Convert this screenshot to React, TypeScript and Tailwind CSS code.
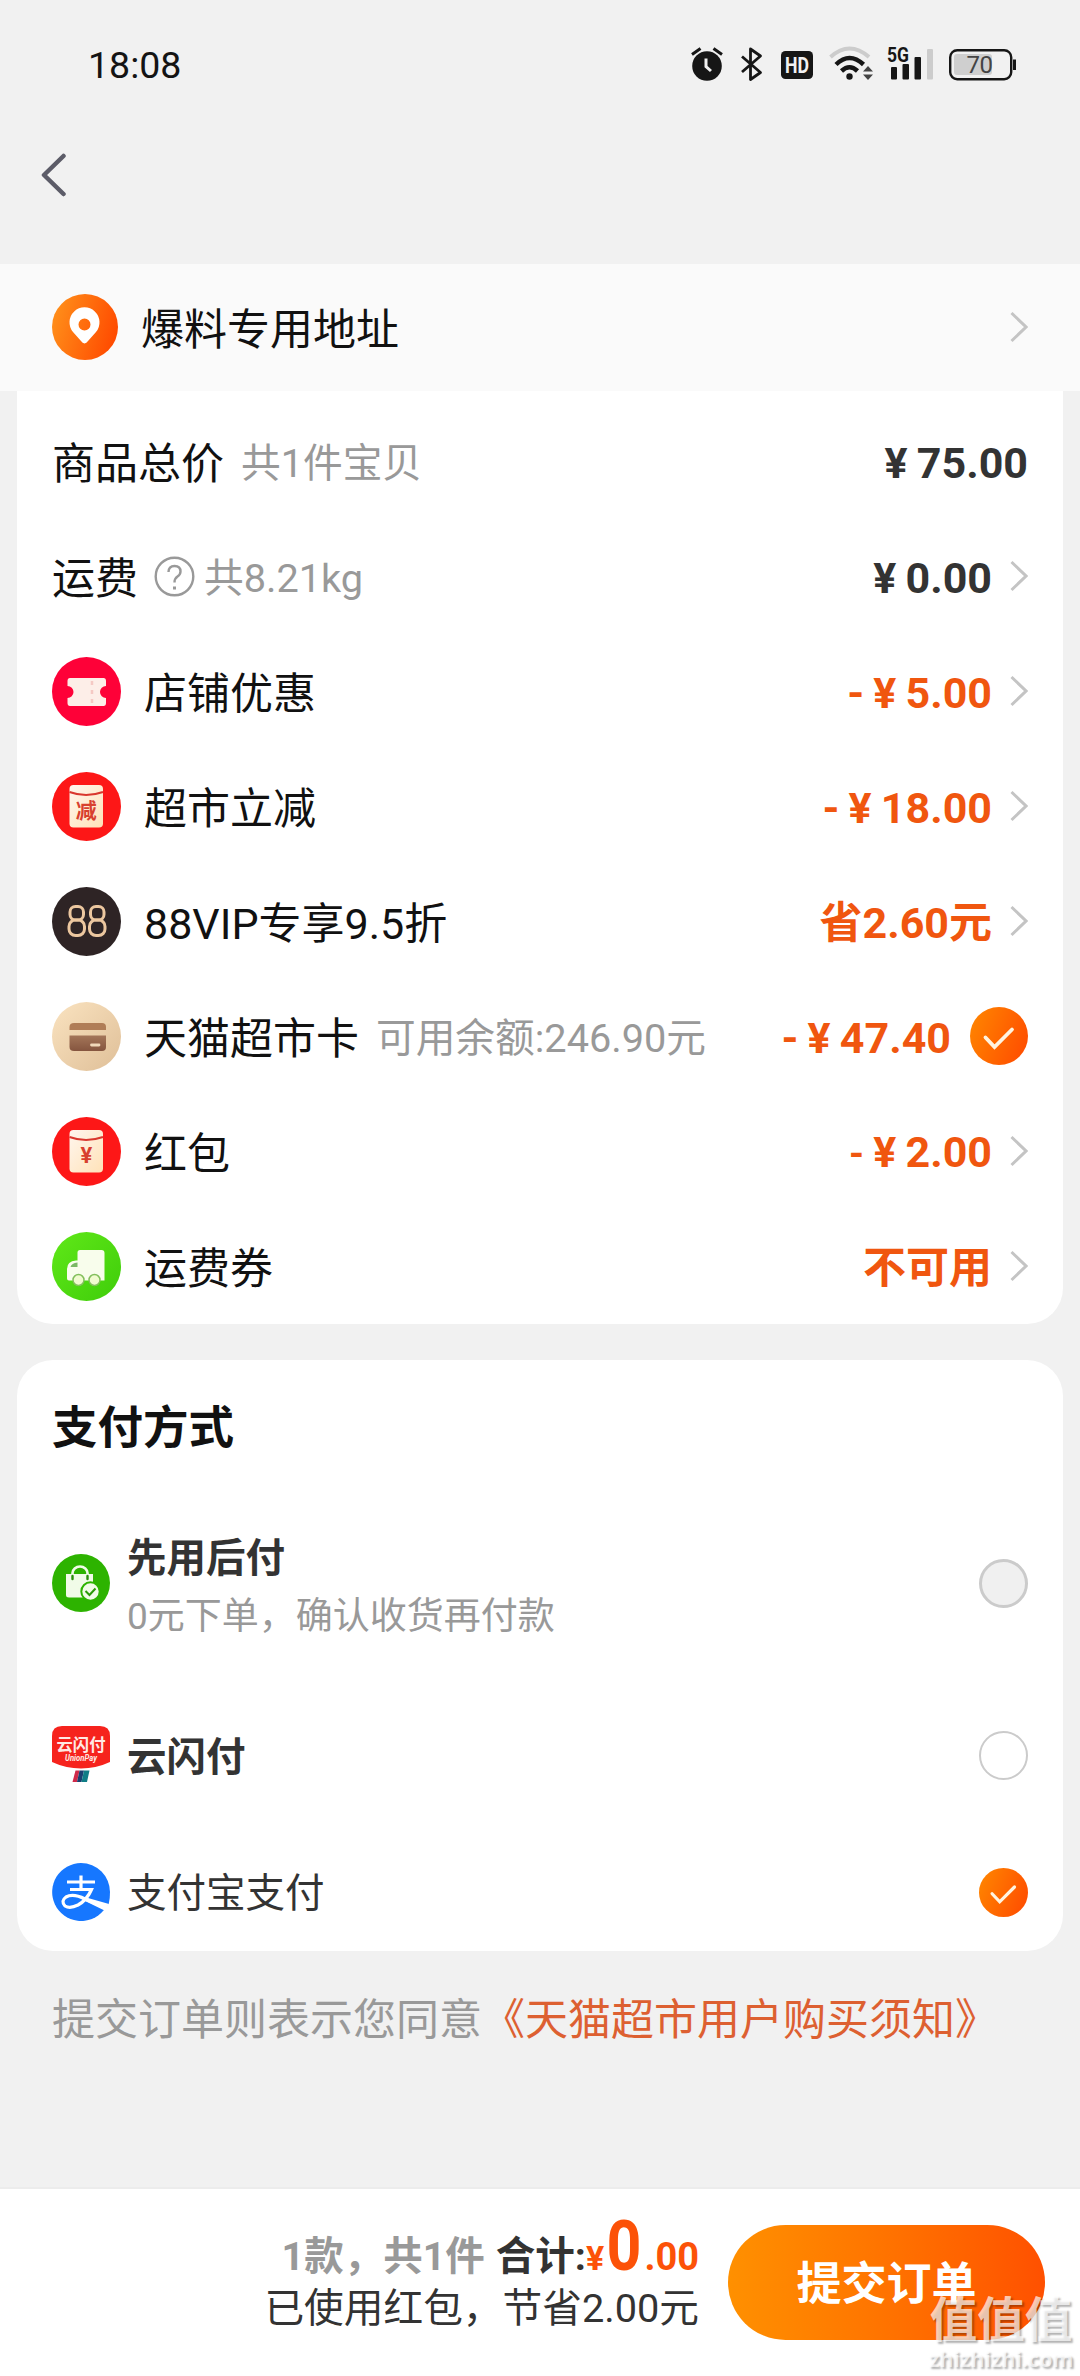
import React from "react";

const FONT = "font-['Roboto','Noto_Sans_CJK_SC',sans-serif]";

function Chevron() {
  return (
    <svg className="mb-[2px] ml-[18px] h-[32px] w-[18px] shrink-0" viewBox="0 0 18 32" fill="none" stroke="#c4c4c4" strokeWidth="3">
      <path d="M1.5 2 L16 16 L1.5 30" />
    </svg>
  );
}

function Check({ size }: { size: "lg" | "md" }) {
  return (
    <svg className={size === "lg" ? "mb-[1px] ml-[19px] h-[58px] w-[58px] shrink-0" : "h-[49px] w-[49px] shrink-0"} viewBox="0 0 58 58" fill="none">
      <defs>
        <linearGradient id={"ck" + size} x1="0" y1="0.2" x2="1" y2="0.6">
          <stop offset="0" stopColor="#ff8400" />
          <stop offset="1" stopColor="#ff5000" />
        </linearGradient>
      </defs>
      <circle cx="29" cy="29" r="29" fill={"url(#ck" + size + ")"} />
      <path d="M15.5 30.5 L24.5 40 L42 22.5" stroke="#fff4e0" strokeWidth="3.8" strokeLinecap="round" />
    </svg>
  );
}

function Badge({ children }: { children: React.ReactNode }) {
  return (
    <svg className="mr-[23px] h-[69px] w-[69px] shrink-0" viewBox="0 0 69 69" fill="none">
      <defs>
        <linearGradient id="cream" x1="0" y1="0" x2="1" y2="1">
          <stop offset="0" stopColor="#fff6ee" />
          <stop offset="1" stopColor="#ffe2b8" />
        </linearGradient>
        <linearGradient id="beige" x1="0" y1="0" x2="1" y2="1">
          <stop offset="0" stopColor="#fae3c0" />
          <stop offset="1" stopColor="#dfbf98" />
        </linearGradient>
        <linearGradient id="brown" x1="0" y1="0" x2="0" y2="1">
          <stop offset="0" stopColor="#a47659" />
          <stop offset="1" stopColor="#85553f" />
        </linearGradient>
        <linearGradient id="greenTruck" x1="0" y1="0" x2="1" y2="1">
          <stop offset="0" stopColor="#60e818" />
          <stop offset="1" stopColor="#3fcd0a" />
        </linearGradient>
      </defs>
      {children}
    </svg>
  );
}

const CouponIcon = () => (
  <Badge>
    <circle cx="34.5" cy="34.5" r="34.5" fill="#fe0138" />
    <path d="M18 21 H51.5 Q54 21 54 24 V29 A6 6 0 0 0 54 41 V46 Q54 49 51.5 49 H18 Q15.500 49 15.500 46 V41 A6 6 0 0 0 15.500 29 V24 Q15.500 21 18 21Z" fill="#fdeee8" />
    <path d="M40 24 V47" stroke="#f5c9c4" strokeWidth="2.5" strokeDasharray="4 5" />
  </Badge>
);

function EnvelopeIcon({ mark }: { mark: string }) {
  return (
    <Badge>
      <circle cx="34.5" cy="34.5" r="34.5" fill="#fd1717" />
      <rect x="17.5" y="13" width="33.5" height="42.5" rx="4" fill="url(#cream)" />
      <path d="M17.5 20 Q34 26 51 20" stroke="#d9372e" strokeWidth="2" />
      <text x="34.300" y="46" textAnchor="middle" fontSize={mark === "减" ? 21 : 22} fontWeight="700" fill="#d8402f" fontFamily="Roboto, 'Noto Sans CJK SC', sans-serif">{mark}</text>
    </Badge>
  );
}

const VipIcon = () => (
  <Badge>
    <circle cx="34.5" cy="34.5" r="34.5" fill="#2e2425" />
    <g stroke="#ecc79f" strokeWidth="3">
      <rect x="18" y="19.500" width="13.500" height="13.500" rx="5.500" />
      <rect x="17" y="33" width="15.500" height="15.500" rx="6.500" />
      <rect x="38.500" y="19.500" width="13.500" height="13.500" rx="5.500" />
      <rect x="37.500" y="33" width="15.500" height="15.500" rx="6.500" />
    </g>
  </Badge>
);

const CardIcon = () => (
  <Badge>
    <circle cx="34.5" cy="34.5" r="34.5" fill="url(#beige)" />
    <path d="M17.5 28 V25 Q17.5 21 22 21 H50 Q54 21 54 25 V28Z" fill="#b07d57" />
    <path d="M17.5 33.5 H54 V45 Q54 49 50 49 H22 Q17.5 49 17.5 45Z" fill="url(#brown)" />
    <path d="M39.5 43 H47" stroke="#f0d8ba" strokeWidth="2.8" strokeLinecap="round" />
  </Badge>
);

const TruckIcon = () => (
  <Badge>
    <circle cx="34.5" cy="34.5" r="34.5" fill="url(#greenTruck)" />
    <path d="M28 18 H49.5 Q52.5 18 52.5 21 V48.5 H17 Q15 48.5 15 46.5 V37 Q15 29 24 28.5 L25.5 28.5 V20.5 Q25.5 18 28 18Z" fill="#f8fdec" />
    <path d="M25.5 30.5 V35 H18.5 Q19.5 31 25.5 30.5Z" fill="#7ab865" />
    <circle cx="26.5" cy="48" r="5.5" fill="#f0fbcf" stroke="#83bf5d" strokeWidth="1.5" />
    <circle cx="42.5" cy="48" r="5.5" fill="#f0fbcf" stroke="#83bf5d" strokeWidth="1.5" />
  </Badge>
);

type RowProps = {
  icon?: React.ReactNode;
  label: string;
  note?: React.ReactNode;
  amount: React.ReactNode;
  dark?: boolean;
  tail?: React.ReactNode;
};

function Row({ icon, label, note, amount, dark, tail }: RowProps) {
  return (
    <div className="flex h-[115px] items-center">
      {icon}
      <span className="pt-[4px] text-[43px] leading-[60px] text-[#111]">{label}</span>
      {note}
      <span className={"ml-auto pt-[2px] text-[43px] leading-[60px] font-bold whitespace-pre [word-spacing:-1.5px] " + (dark ? "text-[#333]" : "text-[#f0560f]")}>{amount}</span>
      {tail}
    </div>
  );
}

const Note = ({ children }: { children: React.ReactNode }) => (
  <span className="pt-[4px] text-[39.7px] text-[#999]">{children}</span>
);

function StatusBar() {
  return (
    <div className="flex h-[130px] items-center justify-between pl-[88px] pr-[63px]">
      <span className="pt-[2px] text-[37.5px] leading-none text-[#141414]">18:08</span>
      <svg className="h-[50px] w-[326px]" viewBox="691 40 326 50" fill="none">
        <g stroke="#161616">
          <circle cx="707" cy="66" r="14.8" fill="#161616" stroke="none" />
          <path d="M692 54.5 L700.5 48.5 M713.5 48.5 L722 54.5" strokeWidth="3" />
          <path d="M706 58.5 V66.5 L711 71" stroke="#f1f1f1" strokeWidth="3" />
          <path d="M742 56.5 L760.5 72.5 L750.5 79.5 V49 L760.5 56 L742 72" strokeWidth="2.8" strokeLinejoin="round" />
        </g>
        <rect x="781" y="51" width="32" height="28" rx="4.5" fill="#161616" />
        <text x="797" y="72.8" textAnchor="middle" fontSize="22" fontWeight="700" fill="#f1f1f1" textLength="24" lengthAdjust="spacingAndGlyphs" fontFamily="Roboto, sans-serif">HD</text>
        <path d="M830.5 57 Q849.5 40 869 57" stroke="#cccccc" strokeWidth="4" />
        <path d="M836 64.5 Q849.5 51.5 863.5 64.5" stroke="#161616" strokeWidth="4.5" />
        <path d="M841.5 71 Q849.5 63.5 857.5 71" stroke="#161616" strokeWidth="4.5" />
        <circle cx="849.5" cy="76.5" r="3.2" fill="#161616" />
        <path d="M863 71.5 L868 66 L873 71.5Z M863 74.5 L868 80 L873 74.5Z" fill="#444" />
        <text x="887" y="62" fontSize="20.5" fontWeight="700" fill="#161616" textLength="22" lengthAdjust="spacingAndGlyphs" fontFamily="Roboto, sans-serif">5G</text>
        <rect x="891" y="67" width="6" height="12.5" rx="1" fill="#161616" />
        <rect x="902.5" y="64" width="6.5" height="15.5" rx="1" fill="#161616" />
        <rect x="914.5" y="57" width="6.5" height="22.5" rx="1" fill="#161616" />
        <rect x="927" y="49" width="6" height="30.5" rx="1" fill="#cccccc" />
        <rect x="950.2" y="50.2" width="61" height="29" rx="7" stroke="#161616" strokeWidth="2.4" />
        <rect x="954" y="54" width="38" height="21" rx="3" fill="#cfcfcf" />
        <path d="M1014.500 59.5 V70" stroke="#161616" strokeWidth="3" />
        <text x="979.5" y="73" textAnchor="middle" fontSize="24" fill="#444" fontFamily="Roboto, sans-serif" letterSpacing="-0.5">70</text>
      </svg>
    </div>
  );
}

function PayLaterIcon() {
  return (
    <svg className="h-[58px] w-[58px]" viewBox="0 0 58 58" fill="none">
      <circle cx="29" cy="29" r="29" fill="#2db300" />
      <path d="M20.5 22 V19 A7.5 6.5 0 0 1 35.5 19 V22" stroke="#f1fbe8" strokeWidth="2.6" />
      <path d="M14 20 H41 V43.5 H17 Q14 43.5 14 41Z" fill="#f1fbe8" />
      <path d="M20.5 22 V25 M35.5 22 V25" stroke="#2a8d0c" strokeWidth="2.4" strokeLinecap="round" />
      <circle cx="38.5" cy="37.5" r="9.2" fill="#f1fbe8" stroke="#2db300" strokeWidth="2" />
      <path d="M33.5 37 L37.5 41 L43.5 34.5" stroke="#2a9a08" strokeWidth="2" />
    </svg>
  );
}

function UnionPayIcon() {
  return (
    <svg className="mb-[3px] h-[58px] w-[58px]" viewBox="0 0 58 58" fill="none">
      <path d="M10 1 H48 Q58 1 58 11 V37 Q44 43.5 29 43.5 Q14 43.5 0 37 V11 Q0 1 10 1Z" fill="#f6231d" />
      <text x="4.500" y="26" fontSize="17" fontWeight="700" fill="#ffe9e4" textLength="49" lengthAdjust="spacingAndGlyphs" fontFamily="'Noto Sans CJK SC', sans-serif">云闪付</text>
      <text x="29" y="36" textAnchor="middle" fontSize="8.5" fontStyle="italic" fontWeight="700" fill="#ffe9e4" textLength="32" lengthAdjust="spacingAndGlyphs" fontFamily="Roboto, sans-serif">UnionPay</text>
      <path d="M23.5 45.5 H27.500 L25 57 H20.500Z" fill="#d02a4a" />
      <path d="M27.5 45.5 H32 L29.5 57 H25Z" fill="#1b3f70" />
      <path d="M32 45.5 H37.500 L35 57 H29.5Z" fill="#0f7d86" />
    </svg>
  );
}

function AlipayIcon() {
  return (
    <svg className="mb-[1px] h-[58px] w-[58px]" viewBox="0 0 58 58" fill="none">
      <path d="M29 0 A29 29 0 0 1 58 29 Q58 36 56.8 40.5 L51.5 47.5 A29 29 0 1 1 29 0Z" fill="#1677ff" />
      <path d="M15 19 H43 M29 12.500 V26 M18 26.5 H39.5 Q35 37 26 42 Q18 46 13 43 Q8.5 38 14 34 Q21 30 33 36 L54 45" stroke="#fff" strokeWidth="3.2" />
      <path d="M36 35 L57 41 L52.5 47.5 L33 38Z" fill="#fff" />
    </svg>
  );
}

const Radio = ({ disabled }: { disabled?: boolean }) => (
  <span className={"h-[49px] w-[49px] rounded-full " + (disabled ? "border-[3.5px] border-[#cbcbcb] bg-[#f0f0f0]" : "border-[2.5px] border-[#cbcbcb]")} />
);

export default function App() {
  return (
    <div className={"flex h-[2376px] w-[1080px] flex-col overflow-hidden bg-[#f1f1f1] " + FONT}>
      <StatusBar />
      <header className="flex h-[134px] items-start pl-[40px] pt-[23px]">
        <svg className="h-[44px] w-[27px]" viewBox="0 0 27 44" fill="none" stroke="#5c5c68" strokeWidth="4.5" strokeLinecap="round" strokeLinejoin="round">
          <path d="M23.5 3 L4 22 L23.5 41" />
        </svg>
      </header>

      <div className="flex h-[127px] shrink-0 items-center bg-[#fafafa] pl-[52px] pr-[52px]">
        <svg className="mb-[1px] h-[66px] w-[66px]" viewBox="0 0 66 66">
          <defs>
            <linearGradient id="pin" x1="0" y1="0.3" x2="1" y2="0.6">
              <stop offset="0" stopColor="#ff8f1a" />
              <stop offset="1" stopColor="#ff4a00" />
            </linearGradient>
          </defs>
          <circle cx="33" cy="33" r="33" fill="url(#pin)" />
          <path fillRule="evenodd" d="M32.5 49.5 Q30.5 49 29 47 L21 38 A15 15 0 1 1 44 38 L36 47 Q34.5 49 32.5 49.5Z M32.5 24.5 A6 6 0 1 0 32.5 36.5 A6 6 0 1 0 32.5 24.5Z" fill="#fff" />
        </svg>
        <span className="ml-[23px] pt-[4px] text-[43px] leading-[60px] text-[#111]">爆料专用地址</span>
        <span className="ml-auto"><Chevron /></span>
      </div>

      <section className="mx-[17px] h-[933px] shrink-0 rounded-b-[36px] bg-white px-[35px] pt-[13px]">
        <Row label="商品总价" note={<span className="ml-[17px] flex"><Note>共1件宝贝</Note></span>} amount="¥ 75.00" dark />
        <Row
          label="运费"
          note={
            <>
              <svg className="mr-[9px] ml-[16px] h-[41px] w-[41px]" viewBox="0 0 41 41" fill="none" stroke="#999" strokeWidth="2.4">
                <circle cx="20.5" cy="20.5" r="18.8" />
                <path d="M14.5 16 Q14.5 10 20.5 10 Q26.5 10 26.5 15.5 Q26.5 18.5 23.5 20.5 Q20.5 22.5 20.5 26.5" />
                <path d="M20.5 30.5 V33.5" strokeWidth="3" />
              </svg>
              <Note>共8.21kg</Note>
            </>
          }
          amount="¥ 0.00"
          dark
          tail={<Chevron />}
        />
        <Row icon={<CouponIcon />} label="店铺优惠" amount="- ¥ 5.00" tail={<Chevron />} />
        <Row icon={<EnvelopeIcon mark="减" />} label="超市立减" amount="- ¥ 18.00" tail={<Chevron />} />
        <Row icon={<VipIcon />} label="88VIP专享9.5折" amount="省2.60元" tail={<Chevron />} />
        <Row
          icon={<CardIcon />}
          label="天猫超市卡"
          note={<span className="ml-[17px] flex"><Note>可用余额:246.90元</Note></span>}
          amount="- ¥ 47.40"
          tail={<Check size="lg" />}
        />
        <Row icon={<EnvelopeIcon mark="¥" />} label="红包" amount={<><span className="text-[38px]">-</span> ¥ 2.00</>} tail={<Chevron />} />
        <Row icon={<TruckIcon />} label="运费券" amount="不可用" tail={<Chevron />} />
      </section>

      <section className="mx-[17px] mt-[36px] h-[591px] shrink-0 rounded-[36px] bg-white px-[35px] pt-[36px]">
        <h2 className="text-[45.5px] leading-[66px] font-bold text-[#111]">支付方式</h2>
        <div className="mt-[61px] flex h-[120px] items-center">
          <PayLaterIcon />
          <div className="ml-[17px] flex flex-col pt-[8px]">
            <span className="text-[39.5px] leading-[58px] font-bold text-[#333]">先用后付</span>
            <span className="text-[37px] leading-[57px] text-[#999]">0元下单，确认收货再付款</span>
          </div>
          <span className="ml-auto flex"><Radio disabled /></span>
        </div>
        <div className="mt-[77px] flex h-[70px] items-center">
          <UnionPayIcon />
          <span className="ml-[17px] pt-[6px] text-[39.5px] font-bold text-[#333]">云闪付</span>
          <span className="ml-auto flex"><Radio /></span>
        </div>
        <div className="mt-[67px] flex h-[70px] items-center">
          <AlipayIcon />
          <span className="ml-[17px] pt-[4px] text-[39.5px] text-[#333]">支付宝支付</span>
          <span className="ml-auto flex"><Check size="md" /></span>
        </div>
      </section>

      <p className="mt-[38px] pl-[52px] text-[43px] leading-[62px] text-[#999]">
        提交订单则表示您同意<span className="text-[#dd6031]">《天猫超市用户购买须知》</span>
      </p>

      <footer className="relative mt-auto flex h-[189px] shrink-0 items-start justify-end border-t-2 border-[#ececec] bg-white pr-[35px]">
        <div className="mr-[29px] flex flex-col items-end pt-[22px]">
          <div className="flex h-[70px] items-baseline text-[39.5px] leading-[70px] font-bold">
            <span className="mr-[11px] text-[#999]">1款，共1件</span>
            <span className="text-[#333]">合计:</span>
            <span className="text-[34px] text-[#fc5208]">¥</span>
            <span className="text-[70px] text-[#fc5208]"><span className="inline-block scale-x-[0.87]">0</span></span>
            <span className="text-[38px] text-[#fc5208]">.00</span>
          </div>
          <span className="text-[39.7px] leading-[56px] text-[#333]">已使用红包，节省2.00元</span>
        </div>
        <button className="mt-[36px] h-[115px] w-[317px] rounded-full bg-linear-to-r from-[#ff9000] to-[#ff5000] pt-[4px] text-[45px] font-bold text-white">提交订单</button>
        <div className="absolute right-[7px] bottom-[4px] flex w-[144px] flex-col items-center whitespace-nowrap text-white/70 [text-shadow:2px_2px_2px_rgba(0,0,0,0.3)]">
          <span className="text-[47.5px] leading-[50px] font-bold">值值值</span>
          <span className="font-['Noto_Sans'] text-[21.5px] leading-[26px] font-bold">zhizhizhi.com</span>
        </div>
      </footer>
    </div>
  );
}
